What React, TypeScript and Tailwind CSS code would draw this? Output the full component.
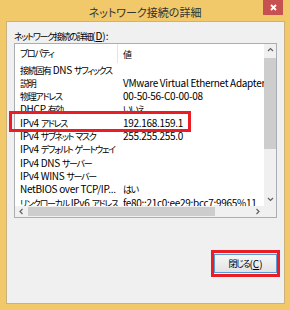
import React from "react";

const rows: [string, string][] = [
  ["接続固有 DNS サフィックス", ""],
  ["説明", "VMware Virtual Ethernet Adapter for VMnet8"],
  ["物理アドレス", "00-50-56-C0-00-08"],
  ["DHCP 有効", "いいえ"],
  ["IPv4 アドレス", "192.168.159.1"],
  ["IPv4 サブネット マスク", "255.255.255.0"],
  ["IPv4 デフォルト ゲートウェイ", ""],
  ["IPv4 DNS サーバー", ""],
  ["IPv4 WINS サーバー", ""],
  ["NetBIOS over TCP/IP...", "はい"],
  ["リンクローカル IPv6 アドレス", "fe80::21c0:ee29:bcc7:9965%11"],
];

function T({ s }: { s: string }) {
  const parts = s.split(/([\u3000-\u9fff\uff00-\uffef]+)/).filter((p) => p.length > 0);
  return (
    <>
      {parts.map((p, i) =>
        /[\u3000-\u9fff\uff00-\uffef]/.test(p) ? (
          <span key={i} className="text-[9px] tracking-[-1.3px]">
            {p}
          </span>
        ) : (
          <span key={i} className="tracking-[-0.3px]">
            {p}
          </span>
        )
      )}
    </>
  );
}

function Chevron({ dir }: { dir: "up" | "down" | "left" | "right" }) {
  const pts =
    dir === "up"
      ? "1,4 3.5,1.5 6,4"
      : dir === "down"
      ? "1,2 3.5,4.5 6,2"
      : dir === "left"
      ? "4.5,1 2,3.5 4.5,6"
      : "2.5,1 5,3.5 2.5,6";
  return (
    <svg width="7" height="7" viewBox="0 0 7 7">
      <polyline points={pts} fill="none" stroke="#606060" strokeWidth="1.2" />
    </svg>
  );
}

export default function App() {
  return (
    <div className="relative w-[290px] h-[310px] bg-[#f1c96b] flex flex-col font-['Noto_Sans_CJK_JP',sans-serif] [font-feature-settings:'palt'] text-black">
      {/* title bar */}
      <div className="h-[21px] grid grid-cols-[1fr_auto_1fr] items-start shrink-0">
        <div />
        <div className="pt-[2px] leading-[20px] text-[11px] text-[#333]">ネットワーク接続の詳細</div>
        <div className="flex justify-end pr-[7px]">
          <div className="w-[20px] h-[15px] bg-[#c75050] flex items-center justify-center">
            <svg width="7" height="7" viewBox="0 0 7 7">
              <path d="M1 1 L6 6 M6 1 L1 6" stroke="#fff" strokeWidth="1.8" />
            </svg>
          </div>
        </div>
      </div>

      {/* client */}
      <div className="flex-1 ml-[6px] mr-[5px] mb-[6px] bg-[#f0f0f0] border border-[#c9b27e] flex flex-col px-[7px] pt-[7px]">
        <div className="h-[13px] leading-[13px] text-[10px] whitespace-nowrap">
          <T s="ネットワーク接続の詳細" />(<span className="underline">D</span>):
        </div>
        <div className="mt-[1px] h-[175px] border border-[#abadb3] bg-white grid grid-cols-[1fr_12px] grid-rows-[1fr_11px] text-[10px]">
          <div className="overflow-hidden">
            <div className="h-[18.5px] flex items-center">
              <div className="w-[103px] h-full pl-[5px] flex items-center border-r border-[#e5e5e5]">
                <T s="プロパティ" />
              </div>
              <div className="pl-[5px]">
                <T s="値" />
              </div>
            </div>
            {rows.map(([k, v], i) => (
              <div key={i} className="h-[13.33px] leading-[13.33px] flex whitespace-nowrap">
                <div className="w-[103px] shrink-0 pl-[5px] overflow-hidden">
                  <T s={k} />
                </div>
                <div className="pl-[5px]">
                  <T s={v} />
                </div>
              </div>
            ))}
          </div>
          <div className="bg-[#f0f0f0] flex flex-col">
            <div className="h-[13px] flex items-center justify-center">
              <Chevron dir="up" />
            </div>
            <div className="mt-[1px] h-[91px] bg-[#cdcdcd]" />
            <div className="flex-1" />
            <div className="h-[13px] flex items-center justify-center">
              <Chevron dir="down" />
            </div>
          </div>
          <div className="bg-[#f0f0f0] flex">
            <div className="w-[13px] flex items-center justify-center">
              <Chevron dir="left" />
            </div>
            <div className="w-[187px] my-[1px] bg-[#cdcdcd]" />
            <div className="flex-1" />
            <div className="w-[13px] flex items-center justify-center">
              <Chevron dir="right" />
            </div>
          </div>
          <div className="bg-[#f0f0f0]" />
        </div>
        <div className="mt-[36px] flex justify-end">
          <div className="w-[63px] h-[19px] border border-[#5b9bd5] bg-gradient-to-b from-[#f6f6f6] to-[#e3e3e3] flex items-center justify-center text-[10px] leading-none whitespace-nowrap">
            <T s="閉じる" />(<span className="underline">C</span>)
          </div>
        </div>
      </div>

      {/* annotation highlights */}
      <div className="absolute left-[9px] top-[111px] w-[182px] h-[21px] border-[3px] border-[#ec1c24]" />
      <div className="absolute left-[211px] top-[250px] w-[69px] h-[27px] border-[3px] border-[#ec1c24]" />
    </div>
  );
}
